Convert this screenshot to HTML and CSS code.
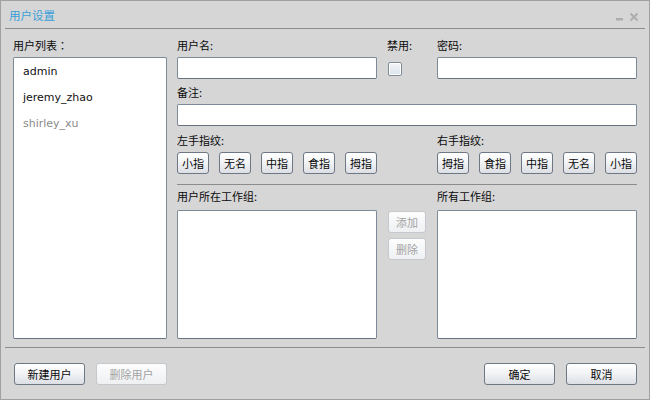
FILE: index.html
```html
<!DOCTYPE html>
<html lang="zh">
<head>
<meta charset="utf-8">
<title>用户设置</title>
<link rel="stylesheet" href="styles.css">
</head>
<body>
<div class="window">
  <div class="titlebar">
    <span class="title">用户设置</span>
    <svg class="controls" width="24" height="10" viewBox="0 0 24 10">
      <rect x="1" y="6" width="7" height="2.5" fill="#adadad"/>
      <path d="M15.5 1.5 L22.5 8.5 M22.5 1.5 L15.5 8.5" stroke="#adadad" stroke-width="2" fill="none"/>
    </svg>
  </div>
  <div class="sep sep-top"></div>
  <div class="main">
    <div class="left">
      <div class="label l-first">用户列表<span class="fw-colon" lang="zh-Hant-TW">：</span></div>
      <ul class="list users">
        <li>admin</li>
        <li>jeremy_zhao</li>
        <li class="muted">shirley_xu</li>
      </ul>
    </div>
    <div class="right">
      <div class="row">
        <div class="col-side">
          <div class="label l-first">用户名:</div>
          <div class="input"></div>
        </div>
        <div class="col-mid">
          <div class="label l-first">禁用:</div>
          <div class="check"></div>
        </div>
        <div class="col-side">
          <div class="label l-first">密码:</div>
          <div class="input"></div>
        </div>
      </div>
      <div class="label l-note">备注:</div>
      <div class="input"></div>
      <div class="row">
        <div class="col-side">
          <div class="label l-finger">左手指纹:</div>
          <div class="fingers">
            <button class="btn finger">小指</button>
            <button class="btn finger">无名</button>
            <button class="btn finger">中指</button>
            <button class="btn finger">食指</button>
            <button class="btn finger">拇指</button>
          </div>
        </div>
        <div class="col-mid"></div>
        <div class="col-side">
          <div class="label l-finger">右手指纹:</div>
          <div class="fingers">
            <button class="btn finger">拇指</button>
            <button class="btn finger">食指</button>
            <button class="btn finger">中指</button>
            <button class="btn finger">无名</button>
            <button class="btn finger">小指</button>
          </div>
        </div>
      </div>
      <div class="sep sep-mid"></div>
      <div class="row">
        <div class="col-side">
          <div class="label l-group">用户所在工作组:</div>
          <div class="list group"></div>
        </div>
        <div class="col-mid mid-actions">
          <button class="btn small disabled">添加</button>
          <button class="btn small disabled">删除</button>
        </div>
        <div class="col-side">
          <div class="label l-group">所有工作组:</div>
          <div class="list group"></div>
        </div>
      </div>
    </div>
  </div>
  <div class="sep sep-bottom"></div>
  <div class="footer">
    <div class="footer-group">
      <button class="btn wide">新建用户</button>
      <button class="btn wide disabled">删除用户</button>
    </div>
    <div class="footer-group">
      <button class="btn wide">确定</button>
      <button class="btn wide">取消</button>
    </div>
  </div>
</div>
</body>
</html>
```

FILE: styles.css
```css
* { box-sizing: border-box; }

html, body {
  margin: 0;
  padding: 0;
  background: #d6d6d6;
}

body {
  font-family: "Noto Sans CJK SC", "Noto Sans", sans-serif;
  font-size: 11px;
  color: #0a0a0a;
}

.window {
  width: 650px;
  height: 400px;
  border: 1px solid #a0a0a0;
  background: #d6d6d6;
  display: flex;
  flex-direction: column;
}

.titlebar {
  height: 27px;
  display: flex;
  align-items: center;
  padding: 1px 10px 0 8px;
}

.title {
  color: #3a9fd9;
  font-size: 11.5px;
  line-height: 16px;
}

.controls {
  margin-left: auto;
  margin-top: 3px;
}

.sep {
  height: 1px;
  background: #8c8c8c;
}

.sep-top { margin: 0 4px; }

.main {
  display: flex;
  gap: 10px;
  padding: 8px 12px 0 12px;
  height: 310px;
}

.left {
  width: 154px;
  display: flex;
  flex-direction: column;
}

.right {
  width: 460px;
  display: flex;
  flex-direction: column;
}

.label {
  line-height: 16px;
  white-space: nowrap;
}

.fw-colon {
  font-family: "Noto Sans CJK TC", "Noto Sans CJK SC", sans-serif;
  font-feature-settings: "locl" 1;
}

.l-first { height: 20px; }
.l-note { padding-top: 5px; height: 25px; }
.l-finger { padding-top: 6px; height: 26px; }
.l-group { padding-top: 3px; height: 25px; }

.row {
  display: flex;
}

.col-side {
  width: 200px;
  display: flex;
  flex-direction: column;
}

.col-mid {
  width: 60px;
  display: flex;
  flex-direction: column;
  padding-left: 10px;
}

.input {
  height: 22px;
  background: #ffffff;
  border: 1px solid #7d8a97;
  border-bottom-color: #66727e;
  border-radius: 2px;
}

.check {
  width: 14px;
  height: 14px;
  margin: 5px 0 0 1px;
  border: 1px solid #7f8d9b;
  border-radius: 2px;
  background: linear-gradient(#f4f6f9, #dbe3ec);
  box-shadow: inset 0 0 0 1px #ffffff;
}

.list {
  background: #ffffff;
  border: 1px solid #7d8a97;
  border-bottom-color: #66727e;
  border-radius: 2px;
}

.users {
  height: 282px;
  margin: 0;
  padding: 1px 0 0 9px;
  list-style: none;
  font-family: "DejaVu Sans", sans-serif;
  font-size: 11px;
}

.users li {
  height: 26px;
  line-height: 26px;
  color: #111111;
}

.users li.muted { color: #8a8a8a; }

.group { height: 129px; }

.fingers {
  display: flex;
  gap: 10px;
}

.btn {
  font-family: "Noto Sans CJK SC", "Noto Sans", sans-serif;
  font-size: 11px;
  color: #0a0a0a;
  height: 22px;
  padding: 0;
  border: 1px solid #6e7885;
  border-radius: 3px;
  background: linear-gradient(#ffffff, #f3f4f6 45%, #dcdfe4);
  line-height: 18px;
}

.btn.disabled {
  color: #a3a3a3;
  border-color: #c5c9ce;
  background: linear-gradient(#fdfdfd, #eef0f2);
}

.finger { width: 32px; }

.sep-mid { margin-top: 10px; }

.mid-actions {
  padding-left: 11px;
  padding-top: 26px;
  gap: 5px;
}

.small { width: 38px; }

.sep-bottom { margin: 8px 4px 0 4px; }

.footer {
  display: flex;
  justify-content: space-between;
  padding: 15px 12px 0 13px;
}

.footer-group {
  display: flex;
  gap: 11px;
}

.wide { width: 71px; }
```
